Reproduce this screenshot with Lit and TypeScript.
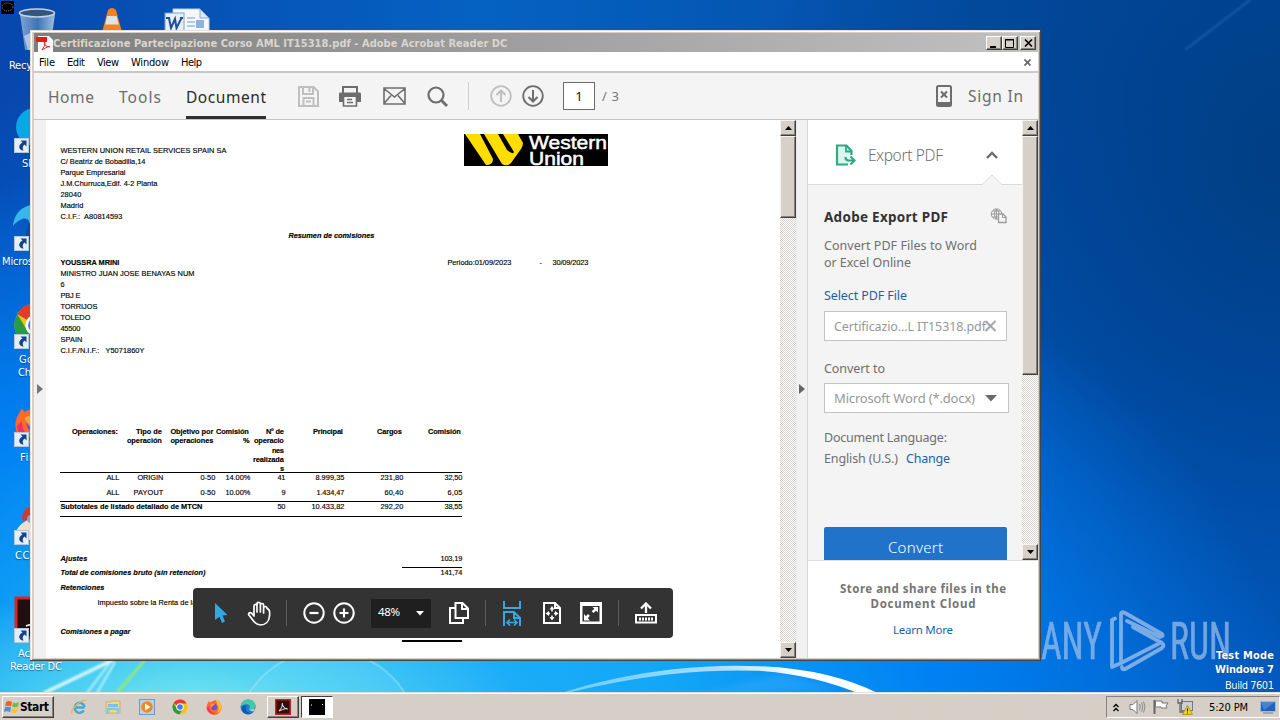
import { LitElement, html, css, svg } from "lit";
import { customElement, property } from "lit/decorators.js";

/** A single line of text whose letter spacing is tuned to fill a given width. */
@customElement("text-run")
class TextRun extends LitElement {
  @property() text = "";
  @property({ type: Number }) w = 0;
  static styles = css`
    :host { display: inline-block; white-space: pre; flex: none; }
  `;
  render() {
    return html`<span>${this.text}</span>`;
  }
  firstUpdated() {
    const span = this.renderRoot.querySelector("span")!;
    const natural = span.getBoundingClientRect().width;
    const gaps = Math.max(1, this.text.length - 1);
    span.style.letterSpacing = `${(this.w - natural) / gaps}px`;
    this.style.width = `${this.w}px`;
  }
}

const t = (text: string, w: number, cls = "") =>
  html`<text-run class=${cls} .text=${text} .w=${w}></text-run>`;

const icon = (w: number, h: number, body: unknown, cls = "") =>
  html`<svg class="ico ${cls}" width=${w} height=${h} viewBox="0 0 ${w} ${h}" fill="none">${body}</svg>`;

const chromeArt = svg`<circle cx="8" cy="8" r="7.5" fill="#fbc116"/><path d="M8 8 1.5 4.2A7.5 7.5 0 0 1 14.6 4.4L8 4.4z" fill="#e33b2e"/><path d="M1.5 4.2A7.5 7.5 0 0 0 7.4 15.5L11 9.6 5 10z" fill="#2a9a48"/><circle cx="8" cy="8" r="3.7" fill="#fff"/><circle cx="8" cy="8" r="2.8" fill="#3b7ded"/>`;
const firefoxArt = svg`<path d="M8 1.5C12 0 15.6 4 15.5 8.4A7.5 7.5 0 1 1 1.8 4.2L3 2l1 1.5z" fill="#ff6a2b"/><path d="M10 1c3 1 5.5 4 5.3 7.6-.3 3-2.6 5-5 5.4 3-2.500 3-6 1-8z" fill="#ffc533"/><path d="M1 9c1 5 6 7 10 5.500C7 15 3 12 3 7z" fill="#f0305e"/><circle cx="8" cy="8" r="3.200" fill="#7b4be0"/><path d="M4 6c2-2 4-1 5 0-2 0-3 1-3 3z" fill="#ffa03a"/>`;
const edgeArt = svg`<circle cx="8" cy="8" r="7.500" fill="#1a80d0"/><path d="M.6 7.500C1.500 2.500 5 .5 8.500.5c4.500 0 7 3 7 6 0 2.700-2 4-4.300 4-1.500 0-2.200-.700-1.500-1.700.6-1.300-.2-3.600-3-3.600-2.600 0-5 1-6.100 2.300z" fill="#43c8a8"/><path d="M6 8c-1 4 2 6.500 6 6-5 3-9.500 0-10-4 0-3 2-4 4-4z" fill="#1259a8"/><path d="M9.500 9c0 2 3 2 5.500.8l-1 2.200c-3 .8-5-.5-4.500-3z" fill="#d7cfc8"/>`;

@customElement("app-root")
class AppRoot extends LitElement {
  static styles = css`
    :host { display: block; width: 1280px; height: 720px; overflow: hidden; }
    * { box-sizing: border-box; }
    .ico { display: block; flex: none; }
    .desktop {
      position: relative; width: 1280px; height: 720px; overflow: hidden;
      font-family: "DejaVu Sans Condensed", "DejaVu Sans", sans-serif; font-stretch: condensed; font-size: 11px;
      background:
        radial-gradient(ellipse 330px 130px at 190px 710px, #7be9ee 0%, rgba(90, 217, 240, .85) 35%, rgba(50, 185, 250, 0) 100%),
        radial-gradient(ellipse 950px 600px at 350px 740px, #29b5fb 0%, #12a6f6 35%, rgba(0, 135, 250, .85) 62%, rgba(0, 100, 220, 0) 100%),
        radial-gradient(ellipse 520px 620px at 1280px 160px, #003f84 0%, rgba(0, 66, 145, .85) 35%, rgba(0, 92, 205, 0) 100%),
        linear-gradient(180deg, rgba(0, 100, 215, 0) 80px, rgba(0, 100, 215, .75) 420px),
        linear-gradient(90deg, #0747ad 0, #0562c2 480px, #0453ae 850px, #034a97 1280px);
    }
    .wall { position: absolute; inset: 0; }
    .shortcut { position: absolute; width: 70px; color: #fff; line-height: 13px; text-shadow: 0 1px 1px #0238; }

    .window {
      position: absolute; left: 30px; top: 30px; width: 1011px; height: 631px;
      display: flex; flex-direction: column; padding: 3px 2px 2px 4px; background: #d6d0c9;
      border-right: 1px solid #444; border-bottom: 1px solid #444;
      box-shadow: inset 1px 1px #e4e0dc, inset 2px 2px #fff, inset -1px -1px #8b8680;
    }
    .title {
      display: flex; align-items: center; height: 19px; flex: none; padding: 1px 2px 0 2px;
      background: linear-gradient(90deg, #7f7f7f, #c1c1c1); color: #d9d5cf; font-weight: bold; font-size: 11px;
    }
    .caption-buttons { display: flex; margin-left: auto; }
    .cap {
      width: 16px; height: 14px; background: #d6d0c8; border: 1px solid; border-color: #fff #404040 #404040 #fff;
      box-shadow: inset -1px -1px #87827c; display: grid; place-items: center;
    }
    .cap:last-child { margin-left: 2px; }
    .menu { display: flex; align-items: center; height: 19px; flex: none; background: #fff; color: #000; padding: 1px 0 0 5px; }
    .menu text-run { margin-right: 12px; }
    .menu .ico { margin: 0 7px 0 auto; }
    .tools {
      display: flex; align-items: center; height: 49px; flex: none; background: #f4f4f4; padding-left: 14px;
      border-top: 2px solid #cac8c5; border-bottom: 1px solid #c4c4c4;
      font-family: "Noto Sans", sans-serif; font-stretch: normal; font-size: 15.500px; color: #6c6c6c;
    }
    .tab { height: 46px; display: flex; align-items: center; padding-top: 1px; margin-right: 25px; }
    .tab.on { color: #2b2b2b; border-bottom: 3px solid #2f2f2f; padding-top: 4px; margin-right: 32px; }
    .m20 { margin-right: 20px; }
    .m21 { margin-right: 21px; }
    .m22 { margin-right: 22px; }
    .down { margin-left: 10px; }
    .vline { width: 1px; height: 28px; background: #cfcfcf; margin: 0 21px 0 20px; }
    .pageno {
      width: 32px; height: 28px; border: 1px solid #6b6b6b; background: #fff; color: #111; margin: 0 7px 0 19px;
      display: grid; place-items: center; font-size: 13px;
    }
    .total { font-size: 13px; color: #777; }
    .phone { margin: 0 16px 0 auto; }
    .signin { margin-right: 15px; }

    .body { display: flex; flex: 1; min-height: 0; }
    .strip { background: #f1f1f1; flex: none; display: flex; align-items: center; }
    .strip.left { width: 12px; padding-left: 2px; }
    .strip.mid { width: 11px; padding-left: 2px; border-right: 1px solid #d8d8d8; }
    .page {
      width: 734px; flex: none; background: #fff; padding: 14px 0 0 14.400px; position: relative; overflow: hidden;
      font-family: "Liberation Sans", sans-serif; font-stretch: normal; font-size: 7.400px; line-height: 11px; color: #000;
      -webkit-text-stroke: .15px #000;
    }
    .b { font-weight: bold; }
    .bi { font-weight: bold; font-style: italic; }
    .lines { display: flex; flex-direction: column; }
    .head { display: flex; justify-content: space-between; width: 548px; height: 96px; }
    .head .lines { padding-top: 11px; }
    .resumen { padding-left: 228px; height: 28px; display: flex; }
    .client { display: flex; height: 170px; margin-top: -1px; }
    .client .lines { width: 387px; }
    .period { display: flex; }
    .period text-run + text-run { margin-left: 28px; }
    .period text-run:last-child { margin-left: 10px; }
    .row {
      display: grid; width: 402px; grid-template-columns: 59px 44px 52px 35px 35px 59px 59px 59px;
      justify-items: end; line-height: 10px;
    }
    .row.hd { height: 46px; border-bottom: 1px solid #000; line-height: 9.300px; font-weight: bold; }
    .row.hd .c { display: flex; flex-direction: column; align-items: flex-end; padding-right: 1.500px; }
    .row.hd .obj { align-items: flex-start; justify-self: start; padding-left: 7px; }
    .row.r1 { height: 15px; }
    .row.r2 { height: 14px; border-bottom: 1px solid #000; }
    .sub { display: grid; grid-template-columns: 1fr 59px 59px 59px; width: 402px; height: 15px; border-bottom: 1px solid #000; justify-items: end; line-height: 10px; }
    .sub .name { display: flex; width: 100%; justify-content: space-between; padding-right: 0; }
    .sum { display: flex; justify-content: space-between; width: 402px; line-height: 10px; }
    .sum.adj { margin-top: 36px; height: 14px; line-height: 11px; }
    .rule { width: 60px; height: 1px; background: #000; margin-left: 342px; }
    .rule.thick { height: 2px; margin-top: 3px; }
    .sum.tot { height: 15px; }
    .sum.ret { height: 15px; }
    .sum.imp { height: 29px; padding-left: 37px; }

    .scroll { width: 17px; flex: none; display: flex; flex-direction: column; background: repeating-conic-gradient(#fff 0 25%, #d8d3cc 0 50%) 0 0 / 2px 2px; border-right: 1px solid #ece9e6; }
    .panel .scroll { width: 16px; border-right: 0; }
    .sb { height: 16px; background: #d6d0c8; border: 1px solid; border-color: #f5f3f0 #404040 #404040 #f5f3f0; box-shadow: inset -1px -1px #87827c; display: grid; place-items: center; }
    .thumb { height: 82px; background: #d6d0c8; border: 1px solid; border-color: #f5f3f0 #404040 #404040 #f5f3f0; box-shadow: inset -1px -1px #87827c; }
    .thumb.tall { height: 239px; }
    .sb.end { margin-top: auto; }

    .panel {
      flex: 1; min-width: 0; display: flex; flex-direction: column; background: #fff;
      font-family: "Noto Sans", sans-serif; font-stretch: normal; font-size: 12.500px; color: #6e6e6e;
    }
    .upper { display: flex; height: 440px; overflow: hidden; }
    .tool { width: 214px; background: #f4f4f4; height: 440px; overflow: hidden; }
    .tool-head { display: flex; align-items: center; height: 65px; background: #fff; border-bottom: 1px solid #dcdcdc; padding: 5px 24px 0 27px; font-size: 15.500px; position: relative; font-weight: 300; }
    .tool-head text-run { margin-left: 12px; }
    .chev { margin-left: auto; }
    .notch { position: absolute; left: 174px; top: 54px; }
    .tool-body { padding: 0 0 0 16px; display: flex; flex-direction: column; align-items: flex-start; line-height: 17px; }
    .tb-title { display: flex; justify-content: space-between; width: 183px; height: 28px; margin-top: 24px; font-size: 13.500px; font-weight: bold; color: #333; }
    .tb-title .ico { margin-top: -1px; }
    .desc { height: 50px; display: flex; flex-direction: column; }
    .link { color: #1a62ad; }
    .field { width: 183px; height: 30px; border: 1px solid #c4c4c4; background: #fff; color: #979797; display: flex; align-items: center; padding-left: 9px; margin-top: 7px; }
    .field .ico { margin-left: -1px; }
    .field.sel { width: 185px; margin-top: 6px; font-size: 13px; }
    .field.sel .ico { margin-left: 10px; }
    .lbl { margin-top: 19px; }
    .lang { margin-top: 16px; height: 21px; }
    .langrow { display: flex; gap: 8px; }
    .convert { margin-top: 60px; width: 183px; height: 41px; background: #2073c9; color: #fff; display: grid; place-items: center; font-size: 15px; border-radius: 2px; font-weight: 300; }
    .foot { flex: 1; border-top: 1px solid #dedede; display: flex; flex-direction: column; align-items: center; padding: 20px 0 0 0; line-height: 15px; font-size: 12px; }
    .foot .b { color: #757575; font-size: 11.500px; }
    .learn { margin-top: 11px; font-size: 11.500px; color: #1a62ad; }

    .float {
      position: absolute; left: 193px; top: 588px; width: 480px; height: 50px; border-radius: 4px; background: #333;
      display: flex; align-items: center; color: #fff; padding-left: 8px; font-family: "Noto Sans", sans-serif; font-size: 11.500px; font-stretch: normal;
    }
    .cell { display: grid; place-items: center; flex: none; }
    .c40 { width: 40px; } .c38 { width: 38px; } .c36 { width: 36px; } .c30 { width: 30px; }
    .s { flex: none; height: 26px; display: grid; justify-items: center; }
    .s::before { content: ""; width: 1px; height: 26px; background: #5c5c5c; }
    .s19 { width: 19px; margin-right: 3px; } .s12 { width: 12px; margin-right: 1px; } .s16 { width: 16px; }
    .zoom { width: 60px; height: 29px; background: #1f1f1f; margin: 0 8px 0 12px; display: flex; align-items: center; padding: 0 7px; justify-content: space-between; }
    .zoom text-run { padding-bottom: 3px; }

    .mode { position: absolute; right: 6px; top: 649px; color: #fff; display: flex; flex-direction: column; align-items: flex-end; line-height: 14px; text-shadow: 0 0 1px #024; }
    .mode .build { margin-top: 2px; }

    .taskbar {
      position: absolute; left: 0; top: 692px; width: 1280px; height: 28px; background: #d5cfc8; display: flex; align-items: center;
      border-top: 1px solid #e2ded9; box-shadow: inset 0 1px #fff; padding: 1px 0 0 2px; color: #000;
    }
    .start { width: 52px; height: 22px; border: 1px solid; border-color: #fff #404040 #404040 #fff; box-shadow: inset -1px -1px #87827c; display: flex; align-items: center; padding-left: 1px; font-weight: bold; font-size: 12px; }
    .quick { display: flex; gap: 17.800px; margin: 0 11px 0 17px; }
    .task { width: 32px; height: 22px; border: 1px solid; border-color: #fff #404040 #404040 #fff; box-shadow: inset -1px -1px #87827c; display: grid; place-items: center; margin-right: 2px; }
    .task.on { background: #fff; border-color: #404040 #fff #fff #404040; box-shadow: none; }
    .tray { margin-left: auto; width: 174px; height: 22px; border: 1px solid; border-color: #87827c #fff #fff #87827c; display: flex; align-items: center; padding-left: 5px; }
    .tray .ico:nth-of-type(2) { margin-left: 9px; }
    .tray .ico:nth-of-type(3) { margin-left: 7px; }
    .tray .ico:nth-of-type(4) { margin-left: 8px; }
    .clock { margin: 0 12px 0 16px; }
    .tiny { position: absolute; left: 0; top: 0; }
  `;

  private shortcutArrow(x: number, y: number) {
    return svg`<g transform="translate(${x} ${y})"><rect x=".5" y=".5" width="14" height="14" fill="#e4eefa" stroke="#b4c6da"/><path d="M6.500 2.500H12.500V8.500L10.600 6.600C8.500 8 8.300 10 9.500 12.800 4.500 12 3.500 7 8.500 4.500z" fill="#12438c"/></g>`;
  }

  private wallpaper() {
    return html`<svg class="wall" width="1280" height="720" viewBox="0 0 1280 720" fill="none">
      <defs>
        <filter id="soft" x="-20%" y="-50%" width="140%" height="200%"><feGaussianBlur stdDeviation="1" /></filter>
        <filter id="softer" x="-20%" y="-20%" width="140%" height="140%"><feGaussianBlur stdDeviation="3" /></filter>
        <linearGradient id="bin" x1="0" x2="1"><stop stop-color="#7fa4cf"/><stop offset=".5" stop-color="#3f72bb"/><stop offset="1" stop-color="#9dbde0"/></linearGradient>
        <linearGradient id="arc" x1="555" x2="880" y1="0" y2="0" gradientUnits="userSpaceOnUse"><stop stop-color="#7fd8ff" stop-opacity=".6"/><stop offset=".5" stop-color="#a8dcff"/><stop offset=".75" stop-color="#fff"/><stop offset="1" stop-color="#fff"/></linearGradient>
      </defs>
      <path d="M1185 50 1250 0" stroke="#5b98d8" stroke-opacity=".3" stroke-width="2" filter="url(#soft)"/>
      <circle cx="327" cy="742" r="92" fill="#8be8ff" fill-opacity=".16" stroke="#b6f2ff" stroke-opacity=".35" stroke-width="2"/>
      <g filter="url(#soft)">
        <path d="M44 693 113 660" stroke="#d9faff" stroke-width="3.500"/>
        <path d="M87 693 112 660M97 693 115 662" stroke="#c5f5fc" stroke-width="1.800"/>
        <path d="M117 693 145 660" stroke="#8fe87c" stroke-width="3"/>
      </g>
      <path d="M560 694C640 668 715 665 760 667 810 669 850 680 880 695L862 694C832 681 800 673 760 670 700 668 640 674 560 694z" fill="url(#arc)" stroke="url(#arc)" stroke-width="1.600"/>
      <path d="M700 694 780 674 840 690z" fill="#4db4ff" fill-opacity=".3" filter="url(#softer)"/>

      <path d="M20 14 25 50 50 50 55 14z" fill="url(#bin)"/>
      <path d="M24 36 28 50 48 50 51 34 42 38 32 32z" fill="#c9d6e6" fill-opacity=".75"/>
      <ellipse cx="37" cy="13" rx="17.500" ry="4" fill="#34557f" stroke="#c4d3e2" stroke-width="1.600"/>
      <path d="M108 10q4-4 8 0l7 26h-22z" fill="#f4821f"/><path d="M107 16h9.500l2.300 8.500h-13.600z" fill="#dfe3e4"/>
      <path d="M173 9h27l9 9v16h-36z" fill="#f4f8fd" stroke="#b9cfe9"/><path d="M200 9v9h9z" fill="#dbe7f5" stroke="#8ba9d0"/>
      <path d="M187 18h8M187 22h8M187 26h8" stroke="#6f9bd3"/><rect x="196" y="20" width="8" height="8" fill="#8eb2e0"/>
      <rect x="165" y="13" width="19" height="21" fill="#e5eefa" stroke="#7aa0d4"/>
      <path d="M166 18h4M169 18l2 10 4-9 1.500 9 5-10M180 18h3" stroke="#1e4f9e" stroke-width="2"/>

      <circle cx="35" cy="127" r="19" fill="#0ba6e8"/>
      <path d="M13 226C15 208 28 203 44 204V228H30C31 218 24 214 13 226z" fill="#36b6ea"/><path d="M26 236C26 222 32 219 44 218V244z" fill="#0b4e97"/>
      <g transform="translate(13 302) scale(2.900)">${chromeArt}</g>
      <g transform="translate(14 403) scale(2.600)">${firefoxArt}</g>
      <path d="M22 520C22 508 30 504 44 504V524z" fill="#cf3b2f"/><path d="M16 531C21 522 27 521 34 516L44 540H16z" fill="#ebe0cf"/><circle cx="31" cy="519" r="4" fill="#8f9fd0"/>
      <rect x="16" y="598" width="40" height="40" fill="#1f0e12" stroke="#e0241c" stroke-width="3"/><path d="M26 626q4-2 8-1" stroke="#fff" stroke-width="1.500"/>
      ${[138, 236, 334, 432, 530, 628].map((y) => this.shortcutArrow(14, y))}

      <g fill="#a9c6ee" stroke="#a9c6ee" stroke-width=".6" opacity=".68" font-family="Roboto, sans-serif" font-size="51">
        <text x="1041" y="659" textLength="61" lengthAdjust="spacingAndGlyphs">ANY</text>
        <text x="1170" y="659" textLength="61" lengthAdjust="spacingAndGlyphs">RUN</text>
      </g>
      <g stroke="#a9c6ee" opacity=".72" stroke-width="3.800" stroke-linejoin="round" stroke-linecap="round">
        <path d="M1115 618.500 1112 620V667L1121 663V614Q1121 611 1125 613L1162 634Q1164 636 1160 637L1127 621"/>
        <path d="M1121 663 1160 643"/>
        <path d="M1122 667Q1122 671 1127 668L1162 648Q1165 645 1162 643L1133 627"/>
      </g>
    </svg>`;
  }

  private label(x: number, y: number, text: string, w: number) {
    return html`<div class="shortcut" style="left:${x}px;top:${y}px">${t(text, w)}</div>`;
  }

  private arrow(up: boolean) {
    return icon(7, 4, up ? svg`<path d="M0 4 3.500 0 7 4z" fill="#000"/>` : svg`<path d="M0 0 3.500 4 7 0z" fill="#000"/>`);
  }

  private page() {
    const cell = (cls: string, ...r: [string, number][]) => html`<div class="c ${cls}">${r.map(([s, w]) => t(s, w))}</div>`;
    const row = (cls: string, ...r: [string, number][]) => html`<div class="row ${cls}">${r.map(([s, w]) => t(s, w))}</div>`;
    return html`<div class="page">
      <div class="head">
        <div class="lines">
          ${t("WESTERN UNION RETAIL SERVICES SPAIN SA", 166)}${t("C/ Beatriz de Bobadilla,14", 85)}${t("Parque Empresarial", 65)}
          ${t("J.M.Churruca,Edif. 4-2 Planta", 97)}${t("28040", 21)}${t("Madrid", 23)}${t("C.I.F.:  A80814593", 62)}
        </div>
        <svg width="144" height="32" viewBox="0 0 144 32">
          <rect width="144" height="32" fill="#000"/>
          <path d="M1 0H16L29 25Q29 31 22 31zM20 0H34L43 16Q49 21 50 18L39 0H54L59 9Q59 12 57 15L47 29Q43 33 38 30z" fill="#ffdd00"/>
          <g fill="#fff" stroke="#fff" stroke-width=".5" font-family="Liberation Sans, sans-serif" font-size="19">
            <text x="65" y="15" textLength="78" lengthAdjust="spacingAndGlyphs">Western</text>
            <text x="65" y="31" textLength="55" lengthAdjust="spacingAndGlyphs">Union</text>
          </g>
        </svg>
      </div>
      <div class="resumen bi">${t("Resumen de comisiones", 86)}</div>
      <div class="client">
        <div class="lines">
          ${t("YOUSSRA MRINI", 59, "b")}${t("MINISTRO JUAN JOSE BENAYAS NUM", 134)}${t("6", 4)}${t("PBJ E", 20)}${t("TORRIJOS", 37)}
          ${t("TOLEDO", 30)}${t("45500", 20)}${t("SPAIN", 22)}${t("C.I.F./N.I.F.:   Y5071860Y", 84)}
        </div>
        <div class="period">${t("Periodo:01/09/2023", 64)}${t("-", 3)}${t("30/09/2023", 36)}</div>
      </div>
      <div class="row hd">
        ${cell("", ["Operaciones:", 46])}
        ${cell("", ["Tipo de", 26], ["operación", 35])}
        ${cell("obj", ["Objetivo por", 43], ["operaciones", 43])}
        ${cell("", ["Comisión", 33], ["%", 6])}
        ${cell("", ["Nº de", 18], ["operacio", 30], ["nes", 12], ["realizada", 31], ["s", 4])}
        ${cell("", ["Principal", 30])}${cell("", ["Cargos", 25])}${cell("", ["Comisión", 33])}
      </div>
      ${row("r1", ["ALL", 13], ["ORIGIN", 26], ["0-50", 15], ["14.00%", 25], ["41", 8], ["8.999,35", 29], ["231,80", 23], ["32,50", 18])}
      ${row("r2", ["ALL", 13], ["PAYOUT", 30], ["0-50", 15], ["10.00%", 25], ["9", 4], ["1.434,47", 28], ["60,40", 19], ["6,05", 15])}
      <div class="sub">
        <div class="name">${t("Subtotales de listado detallado de MTCN", 142, "b")}${t("50", 8)}</div>
        ${t("10.433,82", 33)}${t("292,20", 23)}${t("38,55", 18)}
      </div>
      <div class="sum adj">${t("Ajustes", 27, "bi")}${t("103,19", 22)}</div>
      <div class="rule"></div>
      <div class="sum tot">${t("Total de comisiones bruto (sin retencion)", 145, "bi")}${t("141,74", 22)}</div>
      <div class="sum ret">${t("Retenciones", 44, "bi")}</div>
      <div class="sum imp">${t("Impuesto sobre la Renta de la", 99)}</div>
      <div class="sum">${t("Comisiones a pagar", 70, "bi")}</div>
      <div class="rule thick"></div>
    </div>`;
  }

  private side() {
    return html`<div class="panel">
      <div class="upper">
        <div class="tool">
          <div class="tool-head">
            ${icon(21, 22, svg`<path d="M13 20.500H2V1.500H11.500L16.500 7V11" fill="#dcf5ee" stroke="#2fa884" stroke-width="2.200"/><path d="M11 2V7.500H16" stroke="#2fa884" stroke-width="1.800"/><path d="M10.500 13V14Q11 16.500 14 16.500H19M15.500 12.500 19.500 16.500 15.500 20.500" stroke="#2fa884" stroke-width="2.200"/>`)}
            ${t("Export PDF", 75)}
            ${icon(12, 8, svg`<path d="M1 7 6 2l5 5" stroke="#6a6a6a" stroke-width="2.300"/>`, "chev")}
            <svg class="notch" width="20" height="11" viewBox="0 0 20 11"><path d="M0 11 10 1 20 11z" fill="#f4f4f4"/><path d="M0 10.500 10 1 20 10.500" fill="none" stroke="#dcdcdc"/></svg>
          </div>
          <div class="tool-body">
            <div class="tb-title">${t("Adobe Export PDF", 124)}
              ${icon(17, 16, svg`<circle cx="6.500" cy="6" r="5.200" stroke="#9b9b9b"/><path d="M1 6H9M6.500 1V11M2.500 3H10.500M2.500 9H8M6.500 1Q2 6 6.500 11M6.500 1Q9 3 9 5" stroke="#9b9b9b"/><path d="M8.500 6H13L16 9V14.500H8.500z" fill="#f4f4f4" stroke="#9b9b9b" stroke-width="1.300"/><path d="M12.500 6V9.500H16" stroke="#9b9b9b"/>`)}</div>
            <div class="desc">${t("Convert PDF Files to Word", 153)}${t("or Excel Online", 87)}</div>
            ${t("Select PDF File", 83, "link")}
            <div class="field">${t("Certificazio...L IT15318.pdf", 152)}${icon(11, 12, svg`<path d="M.5 1 10.500 11M10.500 1 .5 11" stroke="#a5a5a5" stroke-width="2"/>`)}</div>
            ${t("Convert to", 61, "lbl")}
            <div class="field sel">${t("Microsoft Word (*.docx)", 141)}${icon(12, 7, svg`<path d="M0 0H12L6 6.500z" fill="#6b6b6b"/>`)}</div>
            ${t("Document Language:", 123, "lang")}
            <div class="langrow">${t("English (U.S.)", 74)}${t("Change", 44, "link")}</div>
            <div class="convert">${t("Convert", 55)}</div>
          </div>
        </div>
        <div class="scroll"><div class="sb">${this.arrow(true)}</div><div class="thumb tall"></div><div class="sb end">${this.arrow(false)}</div></div>
      </div>
      <div class="foot">${t("Store and share files in the", 166, "b")}${t("Document Cloud", 105, "b")}${t("Learn More", 60, "learn")}</div>
    </div>`;
  }

  private floating() {
    const w = "#fff";
    return html`<div class="float">
      <div class="cell c40">${icon(14, 21, svg`<path d="M1 0 13.500 12 8.500 12.500 11 18.500 8 20 5.500 13.800 1 17z" fill="#2fa9e8"/>`)}</div>
      <div class="cell c36">${icon(24, 25, svg`<path d="M7 15V5Q7 3.300 8.500 3.300T10 5V11V3Q10 1.300 11.700 1.300T13.400 3V11V4Q13.400 2.500 15 2.500T16.600 4V12V7Q16.600 5.500 18.200 5.500T19.800 7L22 9Q23 11 22.500 15C22 21 18 24 13.500 24 9 24 7 21 5 18L1.500 13.500Q2 11 4.500 12L7 15z" stroke="${w}" stroke-width="1.700" stroke-linejoin="round"/>`)}</div>
      <div class="s s19"></div>
      <div class="cell c30">${icon(22, 22, svg`<circle cx="11" cy="11" r="9.700" stroke="${w}" stroke-width="2"/><path d="M6.500 11h9" stroke="${w}" stroke-width="2.200"/>`)}</div>
      <div class="cell c30">${icon(22, 22, svg`<circle cx="11" cy="11" r="9.700" stroke="${w}" stroke-width="2"/><path d="M6.500 11h9M11 6.500v9" stroke="${w}" stroke-width="2.200"/>`)}</div>
      <div class="zoom">${t("48%", 22)}${icon(8, 5, svg`<path d="M0 0H8L4 4.500z" fill="#fff"/>`)}</div>
      <div class="cell c40">${icon(20, 22, svg`<path d="M6.500 1H13.500L19 6.500V16H6.500zM13 1.500V7H18.500" stroke="${w}" stroke-width="2"/><path d="M6 6H1V21H14V17" stroke="${w}" stroke-width="2"/>`)}</div>
      <div class="s s12"></div>
      <div class="cell c40">${icon(18, 25, svg`<g stroke="#35a8dd" stroke-width="2"><path d="M1 0V7H17V0M1 25V11H11L17 17V25M11 11.500V17H16.500"/><path d="M4 21.500H14M7 18.500 4 21.500 7 24.500M11 18.500 14 21.500 11 24.500" stroke-width="1.700"/></g>`)}</div>
      <div class="cell c40">${icon(18, 22, svg`<path d="M1 1H12L17 6V21H1zM12 1V6H17" stroke="${w}" stroke-width="2"/><path d="M9 4 11.500 7.500H6.500zM9 18.500 11.500 15H6.500zM2.500 11.500 6 9V14zM15.500 11.500 12 9V14z" fill="${w}"/><path d="M9 7V9.500M9 13.500V16M5 11.500H7M11 11.500H13" stroke="${w}" stroke-width="1.500"/>`)}</div>
      <div class="cell c38">${icon(22, 22, svg`<path d="M1.250 3V20.750H20.750V3" stroke="${w}" stroke-width="2.500"/><path d="M0 0H22V4H0z" fill="${w}"/><path d="M12.500 10 17 6.500M9 13 5 17" stroke="${w}" stroke-width="2.500"/><path d="M12.500 5H18V10.500zM4 12V18.500H10z" fill="${w}"/>`)}</div>
      <div class="s s16"></div>
      <div class="cell c40">${icon(22, 22, svg`<path d="M11 11V2M6 6.500 11 1.500 16 6.500" stroke="${w}" stroke-width="2.300"/><path d="M1 13H21V20.500H1z" stroke="${w}" stroke-width="2"/><path d="M4 17H18.500" stroke="${w}" stroke-width="3" stroke-dasharray="2 1"/>`)}</div>
    </div>`;
  }

  private appWindow() {
    const g = "#6d6d6d", l = "#bfbfbf";
    return html`<div class="window">
      <div class="title">
        ${icon(17, 17, svg`<path d="M2 1H13L17 5V17H2z" fill="#f8f8f8"/><path d="M0 2H11V7H0z" fill="#e21b1b"/><path d="M6 15Q9 11 9 8 9 6 8 8 9 12 14 12 14 10 6 15" stroke="#e03030"/>`)}
        ${t("Certificazione Partecipazione Corso AML IT15318.pdf - Adobe Acrobat Reader DC", 454)}
        <div class="caption-buttons">
          <div class="cap">${icon(10, 9, svg`<path d="M1 7H7V9H1z" fill="#000"/>`)}</div>
          <div class="cap">${icon(10, 9, svg`<path d="M.5.5H8.500V8.500H.5zM0 1H9" stroke="#000"/>`)}</div>
          <div class="cap">${icon(9, 8, svg`<path d="M1 .5 8 7.500M8 .5 1 7.500" stroke="#000" stroke-width="1.600"/>`)}</div>
        </div>
      </div>
      <div class="menu">${t("File", 16)}${t("Edit", 18)}${t("View", 22)}${t("Window", 38)}${t("Help", 21)}
        ${icon(7, 7, svg`<path d="M.5.5 6.500 6.500M6.500.5.500 6.500" stroke="#666" stroke-width="1.700"/>`)}</div>
      <div class="tools">
        <div class="tab">${t("Home", 46)}</div><div class="tab">${t("Tools", 42)}</div>
        <div class="tab on">${t("Document", 80)}</div>
        <div class="m20">${icon(21, 21, svg`<path d="M1 1H15.500L20 5.500V20H1zM5 1V8H15V1M11.500 2V6M5.500 20V12H15.500V20M8 15.500H13" stroke="${l}" stroke-width="2"/>`)}</div>
        <div class="m22">${icon(22, 21, svg`<path d="M4 7V1H18V7" stroke="${g}" stroke-width="2"/><path d="M1 6.500H21Q22 6.500 22 8V16H18V11H4V16H0V8Q0 6.500 1 6.500z" fill="${g}"/><path d="M4.500 10.500V20H17.500V10.500M8 13.500H13M8 16.500H14" stroke="${g}" stroke-width="1.600"/>`)}</div>
        <div class="m21">${icon(23, 18, svg`<path d="M1 1H22V17H1zM1 1.500 11.500 10 22 1.500M1 16.500 8 8.500M22 16.500 15 8.500" stroke="${g}" stroke-width="1.600"/>`)}</div>
        ${icon(21, 21, svg`<circle cx="9" cy="9" r="7.500" stroke="${g}" stroke-width="2.200"/><path d="M14 14 20 20" stroke="${g}" stroke-width="2.800"/>`)}
        <div class="vline"></div>
        ${icon(22, 22, svg`<circle cx="11" cy="11" r="9.800" stroke="${l}" stroke-width="1.800"/><path d="M11 17V6M6.500 10 11 5.500 15.500 10" stroke="${l}" stroke-width="2"/>`)}
        ${icon(22, 22, svg`<circle cx="11" cy="11" r="9.800" stroke="${g}" stroke-width="1.800"/><path d="M11 5V16M6.500 12 11 16.500 15.500 12" stroke="${g}" stroke-width="2"/>`, "down")}
        <div class="pageno">1</div>${t("/ 3", 17, "total")}
        ${icon(16, 22, svg`<rect x="1" y="1" width="14" height="20" rx="1.500" stroke="${g}" stroke-width="2"/><path d="M1 17H15V21H1z" fill="${g}"/><path d="M5 6.500 11 12.500M11 6.500 5 12.500" stroke="${g}" stroke-width="2"/>`, "phone")}
        ${t("Sign In", 55, "signin")}
      </div>
      <div class="body">
        <div class="strip left">${icon(7, 10, svg`<path d="M1 0 7 5 1 10z" fill="#757575"/>`)}</div>
        ${this.page()}
        <div class="scroll"><div class="sb">${this.arrow(true)}</div><div class="thumb"></div><div class="sb end">${this.arrow(false)}</div></div>
        <div class="strip mid">${icon(7, 10, svg`<path d="M0 0 6 5 0 10z" fill="#666"/>`)}</div>
        ${this.side()}
      </div>
    </div>`;
  }

  render() {
    return html`<div class="desktop">
      ${this.wallpaper()}
      <svg class="tiny" width="15" height="15" viewBox="0 0 15 15"><rect x="1" y="1" width="13" height="13" fill="#000"/><ellipse cx="7.500" cy="7" rx="5.500" ry="4" fill="none" stroke="#aaa" stroke-width=".8" stroke-dasharray="1 1"/></svg>
      ${this.label(9, 59, "Recy", 23)}${this.label(22, 157, "Sk", 12)}${this.label(2, 255, "Micros", 31)}
      ${this.label(19, 353, "Go", 14)}${this.label(18, 366, "Ch", 13)}${this.label(20, 451, "Fir", 13)}${this.label(15, 549, "CCl", 18)}
      ${this.label(18, 647, "Ac", 12)}${this.label(10, 660, "Reader DC", 52)}
      ${this.appWindow()}
      ${this.floating()}
      <div class="mode">${t("Test Mode", 58, "b")}${t("Windows 7", 59, "b")}${t("Build 7601", 49, "build")}</div>
      <div class="taskbar">
        <div class="start">${icon(16, 16, svg`<path d="M2 3Q5 1 8 3L7 7.500Q4 6 1 7.500z" fill="#e8632b"/><path d="M9 3.500Q12 5 15 3L14 7.500Q11 9 8 7.500z" fill="#75b843"/><path d="M1 8.500Q4 7 7 8.500L6 13Q3 11.500 0 13z" fill="#4a8fdc"/><path d="M8 9Q11 10.500 14 8.500L13 13Q10 15 7 13z" fill="#f5c33a"/>`)}${t("Start", 29)}</div>
        <div class="quick">
          ${icon(16, 16, svg`<path d="M13.500 8.500H4.500M12.800 11.500A5 5 0 1 1 13.500 8" stroke="#45a5dc" stroke-width="2.400"/><path d="M1 14.500Q-.5 11 6 5.500 13 0 15 2" stroke="#e0b950" stroke-width="1.300"/>`)}
          ${icon(16, 16, svg`<path d="M1 3H6L7 2H15V14H1z" fill="#eed98c" stroke="#d0b25c"/><path d="M3 5H13V8H3z" fill="#7cc2dc"/><path d="M3 15V10H13V15" stroke="#8bc5e4" stroke-width="2.500"/>`)}
          ${icon(16, 16, svg`<rect x=".5" y=".5" width="15" height="15" fill="#b5d2ec" stroke="#6b9bc8"/><circle cx="8" cy="8" r="5.800" fill="#ef8a1d"/><path d="M6 4.500 11.500 8 6 11.500z" fill="#fff"/>`)}
          ${icon(16, 16, chromeArt)}${icon(16, 16, firefoxArt)}${icon(16, 16, edgeArt)}
        </div>
        <div class="task">${icon(16, 16, svg`<rect x=".75" y=".75" width="14.500" height="14.500" fill="#2e1012" stroke="#c4201c" stroke-width="1.500"/><path d="M4 12Q8 8 7.500 4.500 6.500 4 7.500 6 9 10 12.500 10 12 8.500 4 12" stroke="#f0e8e8"/>`)}</div>
        <div class="task on">${icon(16, 16, svg`<rect width="16" height="16" fill="#000"/><path d="M2 6h1M13 5.500h1" stroke="#fff"/>`)}</div>
        <div class="tray">
          ${icon(8, 9, svg`<path d="M1.500 4 4 1.500 6.500 4M1.500 8 4 5.500 6.500 8" stroke="#000" stroke-width="1.300"/>`)}
          ${icon(17, 16, svg`<path d="M1 5.500H4L8 1.500V14.500L4 10.500H1z" fill="#fff" stroke="#777"/><path d="M10.500 5Q12 8 10.500 11M12.500 3.500Q15 8 12.500 12.500M14.500 2.500Q17.500 8 14.500 13.500" stroke="#888"/>`)}
          ${icon(16, 16, svg`<path d="M1.500 1V15" stroke="#666" stroke-width="2"/><path d="M2.500 2H9V4H15L13 7 14 9H8V8H2.500z" fill="#fff" stroke="#777"/>`)}
          ${icon(16, 16, svg`<rect x="4.500" y="2.500" width="11" height="9" fill="#c9d1d6" stroke="#777"/><path d="M1 0V4H5V0M3 4V13H7" stroke="#666" stroke-width="1.300"/><path d="M10.500 6.500 15.500 15.500H5.500z" fill="#f5cf26" stroke="#b79316"/><path d="M10.500 9.500V12.500M10.500 13.500V14.500" stroke="#222"/>`)}
          ${t("5:20 PM", 39, "clock")}
          ${icon(16, 13, svg`<rect x=".5" y=".5" width="15" height="10" fill="#2262ba" stroke="#9db8d8"/><path d="M1 1H15L4 9z" fill="#6ea3e4" fill-opacity=".5"/><path d="M3 12H13" stroke="#8c979f" stroke-width="1.500"/>`)}
        </div>
      </div>
    </div>`;
  }
}
